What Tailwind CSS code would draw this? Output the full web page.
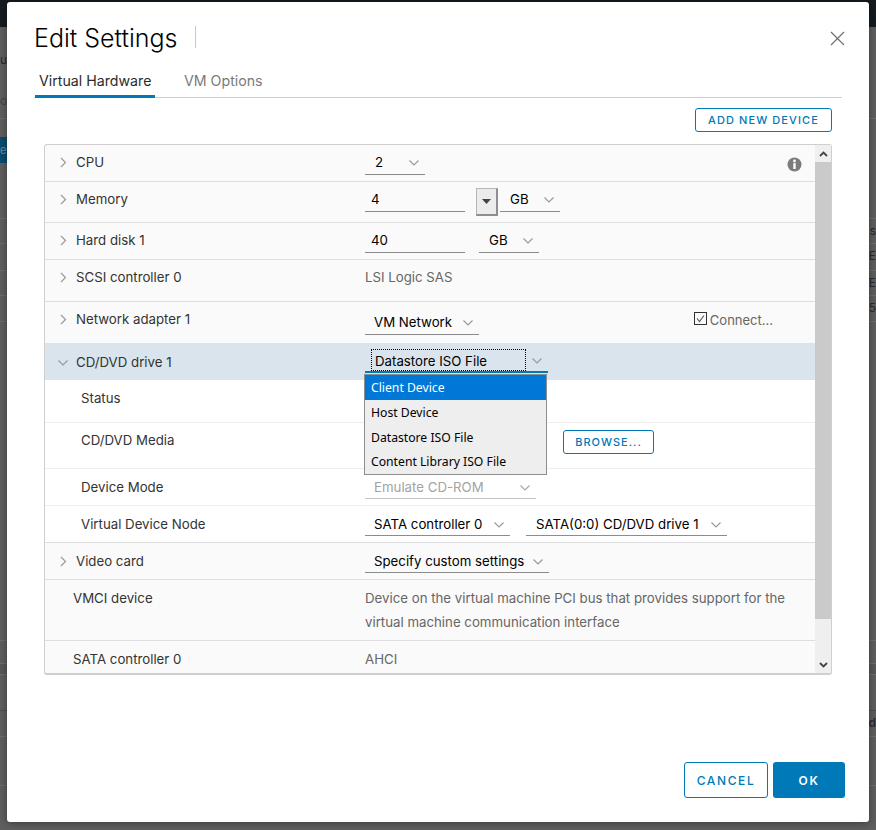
<!DOCTYPE html>
<html lang="en">
<head>
  <meta charset="UTF-8" />
  <title>Edit Settings</title>
  <script src="https://cdn.jsdelivr.net/npm/@tailwindcss/browser@4"></script>
</head>
<body class="relative w-[876px] h-[830px] overflow-hidden bg-[#5f5f5f] font-[Inter,sans-serif] text-[13.25px] text-[#333]">

  <!-- Page behind the modal -->
  <div class="flex flex-col text-[#2b2b2b]">
    <div class="h-[27px] bg-[#141c21]"></div>
    <div class="h-[92px] border-b border-[#6e6e6e] text-[12px]">
      <p class="mt-[23px] leading-5">u</p>
      <p class="mt-[21px] leading-5 text-[#444]">o</p>
    </div>
    <div class="h-[18px]"></div>
    <div class="h-[26px] w-[7px] bg-[#0b4c70] text-[#6b8ea3] text-[11px] leading-[26px]">e</div>
    <div class="h-[56px] border-b border-[#6e6e6e]"></div>
    <div class="h-[25px] border-b border-[#6e6e6e] text-right text-[12px] leading-6">s</div>
    <div class="h-[27px] border-b border-[#6e6e6e] text-right text-[12px] leading-6">E</div>
    <div class="h-[25px] border-b border-[#6e6e6e] text-right text-[12px] leading-6">E</div>
    <div class="h-[26px] border-b border-[#6e6e6e] text-right text-[12px] leading-6">5</div>
    <div class="h-[319px] border-b border-[#6e6e6e]"></div>
    <div class="h-[23px] border-b border-[#6e6e6e]"></div>
    <div class="h-[11px] bg-[#595959] border-b border-[#6e6e6e]"></div>
    <div class="h-[36px] border-b border-[#4f4f4f]"></div>
    <div class="h-[26px] border-b border-[#6e6e6e] text-right text-[12px] leading-6 font-semibold">d</div>
    <div class="h-[49px] border-b border-[#6e6e6e]"></div>
  </div>

  <!-- Modal -->
  <div class="absolute left-[7px] top-[2px] w-[862px] h-[820px] bg-white rounded-[3px] shadow-[0_1px_8px_rgba(0,0,0,0.4)] flex flex-col">
    <div class="flex items-center mt-[24px] ml-[27px] mr-[24px] h-[22px]">
      <h1 class="mt-[2px] text-[25px] font-light leading-[22px] text-black">Edit Settings</h1>
      <div class="ml-[18px] w-px h-[22px] bg-[#c8c8c8]"></div>
      <svg class="ml-auto mt-[2px]" width="15" height="15" viewBox="0 0 15 15" fill="none" stroke="#6f6f6f" stroke-width="1.2"><path d="M1 1l13 13M14 1L1 14"/></svg>
    </div>

    <div class="flex mt-[19px] mx-[27px] h-[31px] border-b border-[#cfcfcf] text-[14.2px]">
      <div class="ml-px w-[120px] h-[31px] px-[4px] border-b-[3px] border-[#0079b8] leading-[28px] text-[#2b2b2b] whitespace-nowrap">Virtual Hardware</div>
      <div class="ml-[29px] leading-[28px] text-[#7a7a7a]">VM Options</div>
    </div>

    <button class="self-end mt-[10px] mr-[37px] w-[137px] h-[24px] border border-[#0079b8] rounded-[3px] text-[#0079b8] text-[11px] font-medium tracking-[1.1px]">ADD NEW DEVICE</button>

    <!-- Device table -->
    <div class="flex ml-[37px] mt-[12px] w-[788px] h-[531px] border border-[#cfcfcf] border-b-2 rounded-[3px] bg-[#fafafa]">
      <div class="w-[770px] flex flex-col">

        <div class="flex h-[37px] border-b border-[#dedede]">
          <div class="w-[320px] mt-[6px] h-[23px] flex items-center">
            <svg class="ml-[14px] mr-[9px]" width="8" height="11" viewBox="0 0 8 11" fill="none" stroke="#9a9a9a" stroke-width="1.2"><path d="M2 1l4.5 4.5L2 10"/></svg>
            <span>CPU</span>
          </div>
          <div class="mt-[6px] w-[60px] h-[24px] border-b border-[#8c8c8c] flex items-center justify-between pl-[10px] pr-[6px] text-black">
            <span>2</span>
            <svg width="10" height="6" viewBox="0 0 10 6" fill="none" stroke="#9a9a9a" stroke-width="1.2"><path d="M.5 .5L5 5 9.5 .5"/></svg>
          </div>
          <svg class="ml-auto mr-[13px] mt-[12px]" width="15" height="15" viewBox="0 0 15 15"><circle cx="7.5" cy="7.5" r="7" fill="#7c7c7c"/><rect x="6.3" y="6.2" width="2.4" height="5.8" fill="#fff"/><circle cx="7.5" cy="4" r="1.4" fill="#fff"/></svg>
        </div>

        <div class="flex h-[41px] border-b border-[#dedede]">
          <div class="w-[320px] mt-[6px] h-[23px] flex items-center">
            <svg class="ml-[14px] mr-[9px]" width="8" height="11" viewBox="0 0 8 11" fill="none" stroke="#9a9a9a" stroke-width="1.2"><path d="M2 1l4.5 4.5L2 10"/></svg>
            <span>Memory</span>
          </div>
          <div class="mt-[6px] w-[100px] h-[24px] border-b border-[#8c8c8c] pl-[6px] leading-[23px] text-black">4</div>
          <div class="mt-[6px] ml-[11px] w-[22px] h-[28px] bg-[#ececec] border border-[#b5b5b5] border-r-2 border-b-2 border-r-[#8f8f8f] border-b-[#8f8f8f] flex items-center justify-center">
            <svg width="9" height="5" viewBox="0 0 9 5"><path d="M0 0h9L4.5 5z" fill="#444"/></svg>
          </div>
          <div class="mt-[6px] ml-[2px] w-[60px] h-[24px] border-b border-[#8c8c8c] flex items-center justify-between pl-[10px] pr-[6px] text-black">
            <span>GB</span>
            <svg width="10" height="6" viewBox="0 0 10 6" fill="none" stroke="#9a9a9a" stroke-width="1.2"><path d="M.5 .5L5 5 9.5 .5"/></svg>
          </div>
        </div>

        <div class="flex h-[37px] border-b border-[#dedede]">
          <div class="w-[320px] mt-[6px] h-[23px] flex items-center">
            <svg class="ml-[14px] mr-[9px]" width="8" height="11" viewBox="0 0 8 11" fill="none" stroke="#9a9a9a" stroke-width="1.2"><path d="M2 1l4.5 4.5L2 10"/></svg>
            <span>Hard disk 1</span>
          </div>
          <div class="mt-[6px] w-[100px] h-[24px] border-b border-[#8c8c8c] pl-[6px] leading-[23px] text-black">40</div>
          <div class="mt-[6px] ml-[14px] w-[60px] h-[24px] border-b border-[#8c8c8c] flex items-center justify-between pl-[10px] pr-[6px] text-black">
            <span>GB</span>
            <svg width="10" height="6" viewBox="0 0 10 6" fill="none" stroke="#9a9a9a" stroke-width="1.2"><path d="M.5 .5L5 5 9.5 .5"/></svg>
          </div>
        </div>

        <div class="flex h-[42px] border-b border-[#dedede]">
          <div class="w-[320px] mt-[6px] h-[23px] flex items-center">
            <svg class="ml-[14px] mr-[9px]" width="8" height="11" viewBox="0 0 8 11" fill="none" stroke="#9a9a9a" stroke-width="1.2"><path d="M2 1l4.5 4.5L2 10"/></svg>
            <span>SCSI controller 0</span>
          </div>
          <div class="mt-[6px] leading-[23px] text-[#666]">LSI Logic SAS</div>
        </div>

        <div class="flex h-[41px]">
          <div class="w-[320px] mt-[6px] h-[23px] flex items-center">
            <svg class="ml-[14px] mr-[9px]" width="8" height="11" viewBox="0 0 8 11" fill="none" stroke="#9a9a9a" stroke-width="1.2"><path d="M2 1l4.5 4.5L2 10"/></svg>
            <span>Network adapter 1</span>
          </div>
          <div class="mt-[9px] w-[114px] h-[24px] border-b border-[#8c8c8c] flex items-center justify-between pl-[9px] pr-[6px] text-black">
            <span>VM Network</span>
            <svg width="10" height="6" viewBox="0 0 10 6" fill="none" stroke="#9a9a9a" stroke-width="1.2"><path d="M.5 .5L5 5 9.5 .5"/></svg>
          </div>
          <label class="ml-auto mr-[42px] mt-[10px] h-[16px] flex items-start text-[13px] text-[#666]">
            <svg width="13" height="14" viewBox="0 0 13 14" fill="none"><rect x=".5" y=".5" width="12" height="12" stroke="#333"/><path d="M3 6.5l2.5 3L10 3.5" stroke="#555" stroke-width="1.1"/></svg>
            <span class="ml-[3px] leading-[16px]">Connect...</span>
          </label>
        </div>

        <div class="flex h-[37px] bg-[#d9e4ec]">
          <div class="w-[320px] mt-[8px] h-[23px] flex items-center">
            <svg class="ml-[13px] mr-[8px]" width="10" height="6" viewBox="0 0 10 6" fill="none" stroke="#9a9a9a" stroke-width="1.2"><path d="M.5 .5L5 5 9.5 .5"/></svg>
            <span>CD/DVD drive 1</span>
          </div>
          <div class="relative mt-[6px] w-[183px] h-[24px] border-b-2 border-[#0079b8] flex items-center text-black">
            <div class="ml-[6px] w-[155px] h-[22px] border border-dotted border-black pl-[3px] leading-[23px]">Datastore ISO File</div>
            <svg class="ml-[6px] mt-[2px]" width="10" height="6" viewBox="0 0 10 6" fill="none" stroke="#9a9a9a" stroke-width="1.2"><path d="M.5 .5L5 5 9.5 .5"/></svg>

            <ul class="absolute left-[-1px] top-[25px] z-10 w-[183px] h-[101px] border border-[#8e8e8e] bg-[#eeeeee] font-['Noto_Sans',sans-serif] text-[12.2px] text-black">
              <li class="h-[25px] pl-[6px] leading-[25px] bg-[#0078d7] text-white">Client Device</li>
              <li class="h-[25px] pl-[6px] leading-[25px]">Host Device</li>
              <li class="h-[25px] pl-[6px] leading-[25px]">Datastore ISO File</li>
              <li class="h-[24px] pl-[6px] leading-[24px]">Content Library ISO File</li>
            </ul>
          </div>
        </div>

        <div class="flex h-[43px] bg-white border-b border-[#eeeeee]">
          <div class="pl-[36px] mt-[7px] leading-[23px]">Status</div>
        </div>

        <div class="flex h-[46px] bg-white border-b border-[#eeeeee]">
          <div class="w-[320px] pl-[36px] mt-[6px] leading-[23px]">CD/DVD Media</div>
          <button class="mt-[7px] ml-[198px] w-[91px] h-[24px] pt-px border border-[#0079b8] rounded-[3px] text-[#0079b8] text-[11px] font-medium tracking-[1px]">BROWSE...</button>
        </div>

        <div class="flex h-[37px] bg-white border-b border-[#eeeeee]">
          <div class="w-[320px] pl-[36px] mt-[7px] leading-[23px]">Device Mode</div>
          <div class="mt-[6px] w-[171px] h-[24px] pt-[2px] border-b border-[#c4c4c4] flex items-center justify-between pl-[9px] pr-[6px] text-[#a3a3a3]">
            <span>Emulate CD-ROM</span>
            <svg width="10" height="6" viewBox="0 0 10 6" fill="none" stroke="#a8a8a8" stroke-width="1.2"><path d="M.5 .5L5 5 9.5 .5"/></svg>
          </div>
        </div>

        <div class="flex h-[37px] bg-white border-b border-[#dedede]">
          <div class="w-[320px] pl-[36px] mt-[7px] leading-[23px]">Virtual Device Node</div>
          <div class="mt-[6px] w-[145px] h-[24px] pt-[2px] border-b border-[#8c8c8c] flex items-center justify-between pl-[9px] pr-[6px] text-black">
            <span>SATA controller 0</span>
            <svg width="10" height="6" viewBox="0 0 10 6" fill="none" stroke="#9a9a9a" stroke-width="1.2"><path d="M.5 .5L5 5 9.5 .5"/></svg>
          </div>
          <div class="mt-[6px] ml-[16px] w-[201px] h-[24px] pt-[2px] border-b border-[#8c8c8c] flex items-center justify-between pl-[10px] pr-[6px] text-black">
            <span>SATA(0:0) CD/DVD drive 1</span>
            <svg width="10" height="6" viewBox="0 0 10 6" fill="none" stroke="#9a9a9a" stroke-width="1.2"><path d="M.5 .5L5 5 9.5 .5"/></svg>
          </div>
        </div>

        <div class="flex h-[37px] border-b border-[#dedede]">
          <div class="w-[320px] mt-[7px] h-[23px] flex items-center">
            <svg class="ml-[14px] mr-[9px]" width="8" height="11" viewBox="0 0 8 11" fill="none" stroke="#9a9a9a" stroke-width="1.2"><path d="M2 1l4.5 4.5L2 10"/></svg>
            <span>Video card</span>
          </div>
          <div class="mt-[6px] w-[184px] h-[24px] pt-[2px] border-b border-[#8c8c8c] flex items-center justify-between pl-[9px] pr-[6px] text-black">
            <span>Specify custom settings</span>
            <svg width="10" height="6" viewBox="0 0 10 6" fill="none" stroke="#9a9a9a" stroke-width="1.2"><path d="M.5 .5L5 5 9.5 .5"/></svg>
          </div>
        </div>

        <div class="flex h-[61px] border-b border-[#dedede]">
          <div class="w-[320px] pl-[28px] mt-[7px] leading-[23px]">VMCI device</div>
          <div class="mt-[6px] leading-[24px] text-[#666]">Device on the virtual machine PCI bus that provides support for the<br>virtual machine communication interface</div>
        </div>

        <div class="flex h-[32px]">
          <div class="w-[320px] pl-[28px] mt-[7px] leading-[23px]">SATA controller 0</div>
          <div class="mt-[7px] leading-[23px] text-[#666]">AHCI</div>
        </div>
      </div>

      <!-- Scrollbar -->
      <div class="w-[16px] flex flex-col bg-[#efefef]">
        <div class="h-[17px] flex items-center justify-center">
          <svg width="9" height="6" viewBox="0 0 9 6" fill="none" stroke="#444" stroke-width="1.8"><path d="M1 5l3.5-3.5L8 5"/></svg>
        </div>
        <div class="h-[457px] bg-[#cacaca]"></div>
        <div class="flex-1"></div>
        <div class="h-[17px] flex items-center justify-center">
          <svg width="9" height="6" viewBox="0 0 9 6" fill="none" stroke="#444" stroke-width="1.8"><path d="M1 1l3.5 3.5L8 1"/></svg>
        </div>
      </div>
    </div>

    <div class="flex justify-end gap-[5px] mt-auto mb-[24px] mr-[24px]">
      <button class="w-[84px] h-[36px] pt-px border border-[#0079b8] rounded-[3px] text-[#0079b8] text-[12px] font-medium tracking-[1.6px]">CANCEL</button>
      <button class="w-[72px] h-[36px] pt-px bg-[#0079b8] rounded-[3px] text-white text-[12px] font-semibold tracking-[1.6px]">OK</button>
    </div>
  </div>

</body>
</html>
